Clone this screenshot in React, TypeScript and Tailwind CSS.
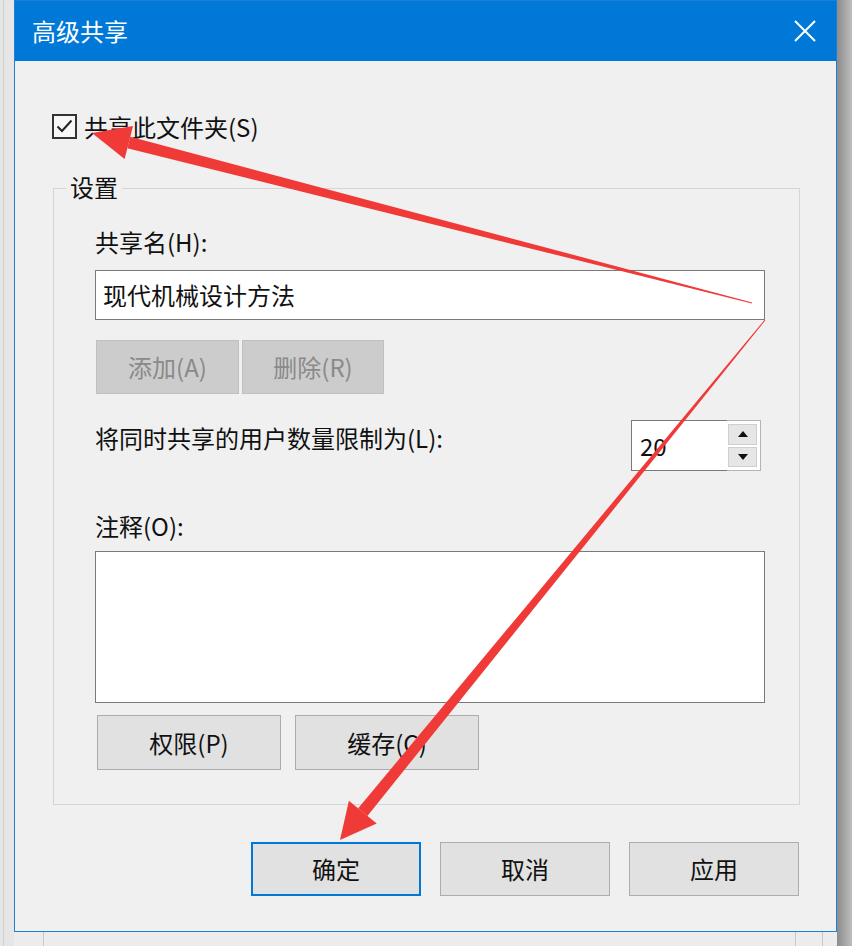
import React from "react";

const font = "font-['Noto_Sans_CJK_SC','Microsoft_YaHei',sans-serif]";

function Btn({
  children,
  className = "",
  disabled = false,
}: {
  children: React.ReactNode;
  className?: string;
  disabled?: boolean;
}) {
  return (
    <div
      className={
        "flex items-center justify-center text-[24px] leading-[24px] " +
        (disabled
          ? "bg-[#cccccc] border border-[#bfbfbf] text-[#8a8a8a] "
          : "bg-[#e1e1e1] border border-[#adadad] text-[#111] ") +
        className
      }
    >
      {children}
    </div>
  );
}

function Arrows() {
  const c = "#ef3a37";
  return (
    <svg
      className="absolute left-0 top-0 pointer-events-none"
      width={852}
      height={946}
      viewBox="0 0 852 946"
    >
      {/* arrow 1 */}
      <polygon points="752.1,302.5 130.3,136.7 127.3,148.3 751.9,303.5" fill={c} />
      <polygon points="92,133 133,126 124.6,159" fill={c} />
      {/* arrow 2 */}
      <polygon points="764.6,319.7 358.2,808.3 367.4,815.9 765.4,320.3" fill={c} />
      <polygon points="340,840 348.9,800.7 376.7,823.5" fill={c} />
    </svg>
  );
}

export default function App() {
  return (
    <div className={"relative w-[852px] h-[946px] flex overflow-hidden bg-[#e4e4e4] " + font}>
      {/* left strip */}
      <div className="w-[14px] h-full bg-[#e6e6e6] flex">
        <div className="w-[3px]" />
        <div className="w-px h-full bg-[#d0d0d0]" />
      </div>

      {/* middle column */}
      <div className="w-[823px] flex flex-col">
        {/* dialog */}
        <div className="h-[932px] border border-[#1f7fd4] bg-[#f0f0f0] flex flex-col">
          {/* title bar */}
          <div className="h-[60px] bg-[#0078d7] flex items-center justify-between pl-[17px] pr-[20px]">
            <span className="text-white text-[24px] leading-[24px]">高级共享</span>
            <svg width="22" height="22" viewBox="0 0 22 22">
              <line x1="1" y1="1" x2="21" y2="21" stroke="white" strokeWidth="2" />
              <line x1="21" y1="1" x2="1" y2="21" stroke="white" strokeWidth="2" />
            </svg>
          </div>

          {/* checkbox row */}
          <div className="mt-[53px] ml-[37px] flex items-center h-[25px]">
            <div className="w-[25px] h-[25px] border-2 border-[#333] bg-[#f7f7f7] flex items-center justify-center">
              <svg width="19" height="19" viewBox="0 0 19 19">
                <polyline
                  points="2.5,9.5 7,14 16.5,3.5"
                  fill="none"
                  stroke="#222"
                  strokeWidth="2"
                />
              </svg>
            </div>
            <span className="ml-[7px] text-[24px] leading-[24px] text-[#111]">共享此文件夹(S)</span>
          </div>

          {/* group box */}
          <div className="relative mt-[49px] ml-[38px] w-[747px] h-[617px] border border-[#d5d5d5] pl-[41px] pt-[41px] flex flex-col">
            <span className="absolute left-[12px] top-[-14px] px-[4px] bg-[#f0f0f0] text-[24px] leading-[24px] text-[#111]">
              设置
            </span>

            <div className="text-[24px] leading-[24px] text-[#111]">共享名(H):</div>
            <div className="mt-[16px] w-[670px] h-[50px] bg-white border border-[#7a7a7a] flex items-center pl-[7px] text-[24px] leading-[24px] text-[#111]">
              现代机械设计方法
            </div>

            <div className="mt-[20px] ml-[1px] flex gap-[3px]">
              <Btn disabled className="w-[143px] h-[54px]">添加(A)</Btn>
              <Btn disabled className="w-[142px] h-[54px]">删除(R)</Btn>
            </div>

            <div className="mt-[26px] w-[670px] flex items-start justify-between">
              <div className="mt-[6px] text-[24px] leading-[24px] text-[#111]">
                将同时共享的用户数量限制为(L):
              </div>
              <div className="mr-[4px] flex h-[51px]">
                <div className="w-[96px] h-full bg-white border border-r-0 border-[#7a7a7a] flex items-center pl-[8px] text-[24px] leading-[24px] text-[#111]">
                  20
                </div>
                <div className="w-[34px] h-full bg-white border border-l-0 border-[#b4b4b4] flex flex-col pt-[3px] pb-[3px] pr-[3px] pl-[1px] gap-[2px]">
                  <div className="flex-1 bg-[#e6e6e6] border border-[#cfcfcf] flex items-center justify-center">
                    <svg width="10" height="6" viewBox="0 0 10 6">
                      <polygon points="0,6 10,6 5,0" fill="#111" />
                    </svg>
                  </div>
                  <div className="flex-1 bg-[#e6e6e6] border border-[#cfcfcf] flex items-center justify-center">
                    <svg width="10" height="6" viewBox="0 0 10 6">
                      <polygon points="0,0 10,0 5,6" fill="#111" />
                    </svg>
                  </div>
                </div>
              </div>
            </div>

            <div className="mt-[43px] text-[24px] leading-[24px] text-[#111]">注释(O):</div>
            <div className="mt-[13px] w-[670px] h-[152px] bg-white border border-[#7a7a7a]" />

            <div className="mt-[12px] ml-[2px] flex gap-[14px]">
              <Btn className="w-[184px] h-[55px]">权限(P)</Btn>
              <Btn className="w-[184px] h-[55px]">缓存(C)</Btn>
            </div>
          </div>

          {/* bottom buttons */}
          <div className="mt-[37px] pr-[37px] flex justify-end gap-[19px]">
            <div className="w-[170px] h-[54px] bg-[#e1e1e1] border-2 border-[#0078d7] flex items-center justify-center text-[24px] leading-[24px] text-[#111]">
              确定
            </div>
            <Btn className="w-[170px] h-[54px]">取消</Btn>
            <Btn className="w-[170px] h-[54px]">应用</Btn>
          </div>
        </div>

        {/* bottom strip */}
        <div className="h-[14px] bg-[#ececec] flex">
          <div className="w-[29px]" />
          <div className="w-px h-full bg-[#c8c8c8]" />
          <div className="flex-1" />
          <div className="w-px h-full bg-[#c8c8c8]" />
          <div className="w-[26px]" />
          <div className="w-px h-full bg-[#c8c8c8]" />
          <div className="w-[14px]" />
        </div>
      </div>

      {/* right strip */}
      <div className="w-[15px] h-full bg-gradient-to-r from-[#8c8c8c] to-[#bdbdbd]" />

      <Arrows />
    </div>
  );
}
